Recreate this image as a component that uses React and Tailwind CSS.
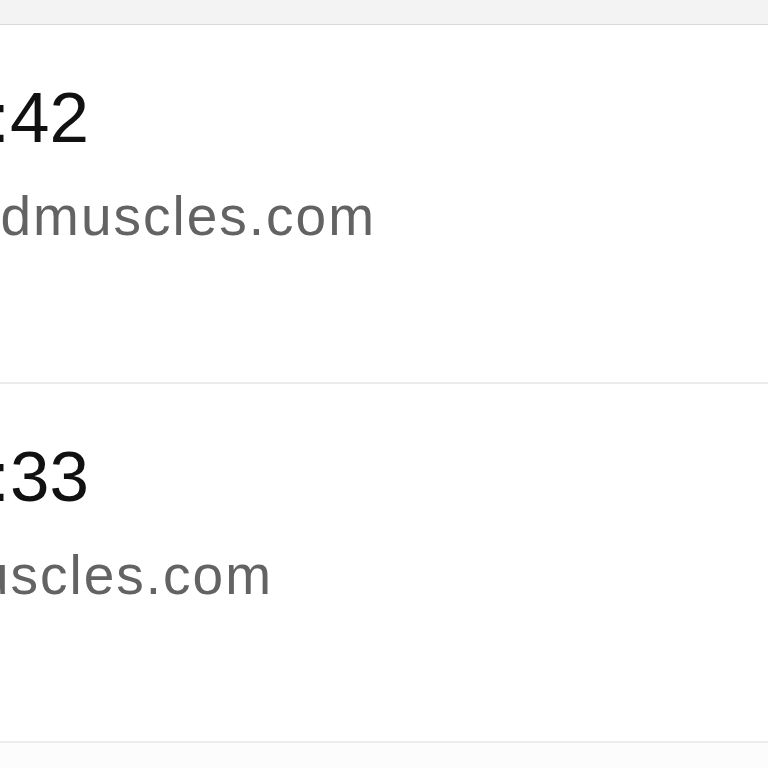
export default function App() {
  const rows = [
    { time: "10:42", domain: "www.dmuscles.com", timeW: "w-[89px]", domW: "w-[376px]" },
    { time: "10:33", domain: "www.muscles.com", timeW: "w-[89px]", domW: "w-[273px]" },
  ];
  return (
    <div
      className="w-[768px] h-[768px] overflow-hidden bg-[#fcfcfc]"
      style={{ fontFamily: '"Liberation Sans", Arial, sans-serif' }}
    >
      <div className="h-[25px] bg-[#f3f3f3] border-b border-[#d9d9d9]" />
      {rows.map((r, i) => (
        <div
          key={i}
          className="h-[359px] bg-white border-b-2 border-[#ececec] overflow-hidden pt-[57px]"
        >
          <div className={`flex justify-end ${r.timeW}`}>
            <span className="whitespace-nowrap text-[71px] leading-none text-[#111]">
              {r.time}
            </span>
          </div>
          <div className={`flex justify-end mt-[36px] ${r.domW}`}>
            <span className="whitespace-nowrap text-[55px] leading-none tracking-[2px] text-[#636363]">
              {r.domain}
            </span>
          </div>
        </div>
      ))}
    </div>
  );
}
